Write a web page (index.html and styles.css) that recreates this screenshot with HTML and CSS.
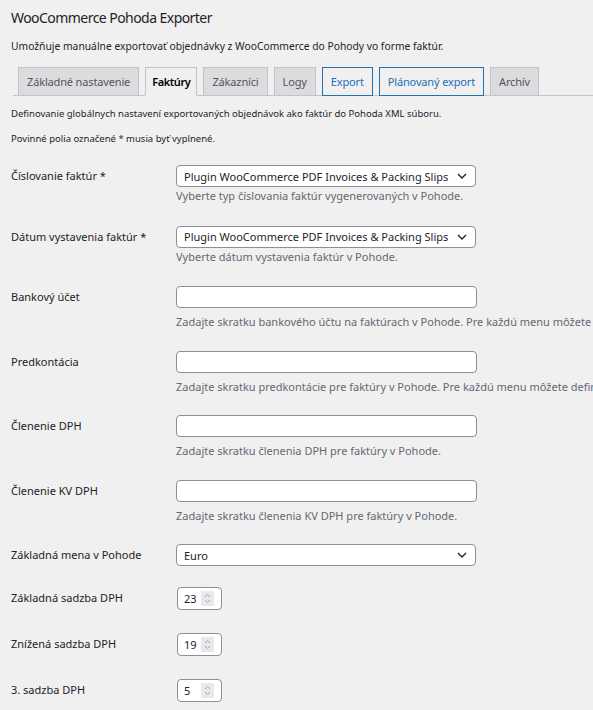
FILE: index.html
```html
<!DOCTYPE html>
<html lang="sk">
<head>
<meta charset="utf-8">
<title>WooCommerce Pohoda Exporter</title>
<link rel="stylesheet" href="styles.css">
</head>
<body>
<div class="wrap">
  <h1 class="title">WooCommerce Pohoda Exporter</h1>
  <p class="intro">Umožňuje manuálne exportovať objednávky z WooCommerce do Pohody vo forme faktúr.</p>

  <nav class="tabs">
    <a class="tab">Základné nastavenie</a>
    <a class="tab active">Faktúry</a>
    <a class="tab">Zákazníci</a>
    <a class="tab">Logy</a>
    <a class="tab blue">Export</a>
    <a class="tab blue">Plánovaný export</a>
    <a class="tab">Archív</a>
  </nav>

  <p class="note note-first">Definovanie globálnych nastavení exportovaných objednávok ako faktúr do Pohoda XML súboru.</p>
  <p class="note">Povinné polia označené * musia byť vyplnené.</p>

  <div class="form">
    <div class="row row-sel">
      <div class="lbl">Číslovanie faktúr *</div>
      <div class="field">
        <div class="select"><span>Plugin WooCommerce PDF Invoices &amp; Packing Slips</span><svg class="chev" width="10" height="6" viewBox="0 0 10 6"><path d="M1 1l4 4 4-4" fill="none" stroke="#1d2327" stroke-width="1.4"/></svg></div>
        <p class="desc desc-sel">Vyberte typ číslovania faktúr vygenerovaných v Pohode.</p>
      </div>
    </div>

    <div class="row row-sel">
      <div class="lbl">Dátum vystavenia faktúr *</div>
      <div class="field">
        <div class="select"><span>Plugin WooCommerce PDF Invoices &amp; Packing Slips</span><svg class="chev" width="10" height="6" viewBox="0 0 10 6"><path d="M1 1l4 4 4-4" fill="none" stroke="#1d2327" stroke-width="1.4"/></svg></div>
        <p class="desc desc-sel">Vyberte dátum vystavenia faktúr v Pohode.</p>
      </div>
    </div>

    <div class="row row-inp">
      <div class="lbl">Bankový účet</div>
      <div class="field">
        <div class="input"></div>
        <p class="desc desc-inp">Zadajte skratku bankového účtu na faktúrach v Pohode. Pre každú menu môžete definovať inú skratku.</p>
      </div>
    </div>

    <div class="row row-inp">
      <div class="lbl">Predkontácia</div>
      <div class="field">
        <div class="input"></div>
        <p class="desc desc-inp">Zadajte skratku predkontácie pre faktúry v Pohode. Pre každú menu môžete definovať inú skratku.</p>
      </div>
    </div>

    <div class="row row-inp">
      <div class="lbl">Členenie DPH</div>
      <div class="field">
        <div class="input"></div>
        <p class="desc desc-inp">Zadajte skratku členenia DPH pre faktúry v Pohode.</p>
      </div>
    </div>

    <div class="row row-inp">
      <div class="lbl">Členenie KV DPH</div>
      <div class="field">
        <div class="input"></div>
        <p class="desc desc-inp">Zadajte skratku členenia KV DPH pre faktúry v Pohode.</p>
      </div>
    </div>

    <div class="row row-cur">
      <div class="lbl">Základná mena v Pohode</div>
      <div class="field">
        <div class="select"><span>Euro</span><svg class="chev" width="10" height="6" viewBox="0 0 10 6"><path d="M1 1l4 4 4-4" fill="none" stroke="#1d2327" stroke-width="1.4"/></svg></div>
      </div>
    </div>

    <div class="row row-num">
      <div class="lbl">Základná sadzba DPH</div>
      <div class="field">
        <div class="num"><span class="val">23</span><span class="spin"><svg width="7" height="11" viewBox="0 0 7 11"><path d="M1 4l2.5-2.5L6 4M1 7l2.5 2.5L6 7" fill="none" stroke="#9a9ca1" stroke-width="0.9"/></svg></span></div>
      </div>
    </div>

    <div class="row row-num">
      <div class="lbl">Znížená sadzba DPH</div>
      <div class="field">
        <div class="num"><span class="val">19</span><span class="spin"><svg width="7" height="11" viewBox="0 0 7 11"><path d="M1 4l2.5-2.5L6 4M1 7l2.5 2.5L6 7" fill="none" stroke="#9a9ca1" stroke-width="0.9"/></svg></span></div>
      </div>
    </div>

    <div class="row row-num">
      <div class="lbl">3. sadzba DPH</div>
      <div class="field">
        <div class="num"><span class="val">5</span><span class="spin"><svg width="7" height="11" viewBox="0 0 7 11"><path d="M1 4l2.5-2.5L6 4M1 7l2.5 2.5L6 7" fill="none" stroke="#9a9ca1" stroke-width="0.9"/></svg></span></div>
      </div>
    </div>
  </div>
</div>
</body>
</html>
```

FILE: styles.css
```css
html, body {
  margin: 0;
  padding: 0;
  background: #f0f0f1;
  overflow: hidden;
}
body {
  font-family: "Noto Sans", "Open Sans", sans-serif;
  color: #1d2327;
  width: 593px;
  height: 710px;
}
.wrap {
  padding: 8px 0 0 11px;
}
.title {
  margin: 0;
  font-size: 14px;
  line-height: 20px;
  font-weight: 400;
  letter-spacing: -0.55px;
  color: #1d2327;
}
.intro {
  margin: 10px 0 0;
  font-size: 10.3px;
  line-height: 16px;
  color: #1d2327;
}
.tabs {
  display: flex;
  gap: 6px;
  margin: 13px 0 0 2px;
  padding-left: 5px;
  border-bottom: 1px solid #c3c4c7;
  height: 28px;
}
.tab {
  box-sizing: border-box;
  height: 29px;
  padding: 0 8px;
  display: flex;
  align-items: center;
  font-size: 11px;
  font-weight: 400;
  letter-spacing: -0.15px;
  color: #50575e;
  background: #dcdcde;
  border: 1px solid #c3c4c7;
  white-space: nowrap;
}
.tab.active {
  background: #f0f0f1;
  color: #000;
  font-weight: 600;
  letter-spacing: -0.4px;
  padding: 0 6px;
  border-bottom-color: #f0f0f1;
}
.tab.blue {
  background: #f0f0f1;
  color: #2271b1;
  border-color: #2271b1;
}
.note {
  margin: 0;
  font-size: 9.5px;
  line-height: 16px;
  color: #1d2327;
}
.note-first {
  margin-top: 10px;
}
.note + .note {
  margin-top: 9px;
}
.form {
  margin-top: 18px;
}
.row {
  display: flex;
  white-space: nowrap;
}
.lbl {
  width: 165px;
  flex: none;
  font-size: 11px;
  line-height: 22px;
}
.field {
  display: flex;
  flex-direction: column;
}
.row-sel { margin-bottom: 21.5px; }
.row-inp { margin-bottom: 20.5px; }
.row-cur { margin-bottom: 21px; }
.row-num { margin-bottom: 23px; }
.select, .input {
  box-sizing: border-box;
  width: 300px;
  height: 22px;
  background: #fff;
  border: 1px solid #8c8f94;
  border-radius: 4px;
}
.select {
  display: flex;
  align-items: center;
  justify-content: space-between;
  padding: 0 8px 0 7px;
  font-size: 11px;
}
.input {
  width: 301px;
}
.chev { flex: none; }
.desc {
  margin: 0;
  font-size: 11px;
  line-height: 16px;
  color: #646970;
}
.desc-sel { margin-top: 1px; }
.desc-inp { margin-top: 6px; }
.num {
  box-sizing: border-box;
  width: 45px;
  height: 23px;
  margin-left: 1px;
  background: #fff;
  border: 1px solid #8c8f94;
  border-radius: 4px;
  display: flex;
  align-items: center;
  padding-left: 6px;
  font-size: 11px;
}
.val {
  width: 17px;
}
.spin {
  width: 13px;
  height: 15px;
  background: #e9e9ed;
  display: flex;
  align-items: center;
  justify-content: center;
}
```
